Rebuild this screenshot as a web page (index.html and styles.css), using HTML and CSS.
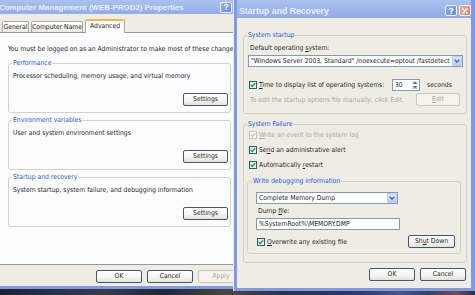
FILE: index.html
```html
<!DOCTYPE html>
<html lang="en">
<head>
<meta charset="utf-8">
<title>Startup and Recovery</title>
<link rel="stylesheet" href="styles.css">
</head>
<body>
<div class="desktop">

  <section class="win win-left">
    <header class="titlebar">
      <span class="title">Computer Management (WEB-PROD2) Properties</span>
      <span class="tbtn help">?</span>
    </header>
    <div class="client">
      <nav class="tabs">
        <span class="tab t1">General</span>
        <span class="tab t2">Computer Name</span>
        <span class="tab sel">Advanced</span>
      </nav>
      <div class="panel">
        <p class="note">You must be logged on as an Administrator to make most of these changes.</p>
        <fieldset class="grp lgrp first">
          <legend>Performance</legend>
          <div class="gbody">
            <p class="desc">Processor scheduling, memory usage, and virtual memory</p>
            <div class="brow"><button class="btn set">Settings</button></div>
          </div>
        </fieldset>
        <fieldset class="grp lgrp">
          <legend>Environment variables</legend>
          <div class="gbody">
            <p class="desc">User and system environment settings</p>
            <div class="brow"><button class="btn set">Settings</button></div>
          </div>
        </fieldset>
        <fieldset class="grp lgrp">
          <legend>Startup and recovery</legend>
          <div class="gbody">
            <p class="desc">System startup, system failure, and debugging information</p>
            <div class="brow"><button class="btn set">Settings</button></div>
          </div>
        </fieldset>
      </div>
      <div class="footer">
        <button class="btn">OK</button>
        <button class="btn">Cancel</button>
        <button class="btn" disabled>Apply</button>
      </div>
    </div>
  </section>

  <section class="win win-right">
    <header class="titlebar">
      <span class="title">Startup and Recovery</span>
      <span class="tbtn help">?</span>
      <span class="tbtn close"><svg width="6" height="6" viewBox="0 0 6 6"><path d="M0.8 0.8L5.2 5.2M5.2 0.8L0.8 5.2" stroke="#fff" stroke-width="1.3" stroke-linecap="round"/></svg></span>
    </header>
    <div class="client">
      <fieldset class="grp g-startup">
        <legend>System startup</legend>
        <div class="gbody">
          <div class="lbl">Default operating <u>s</u>ystem:</div>
          <div class="combo">
            <span class="val">"Windows Server 2003, Standard" /noexecute=optout /fastdetect</span>
            <span class="drop"><svg width="6" height="4" viewBox="0 0 6 4"><path d="M0.7 0.8L3 3.1L5.3 0.8" fill="none" stroke="#4d6185" stroke-width="1.3"/></svg></span>
          </div>
          <div class="row r-time">
            <span class="chk"><svg width="6" height="6" viewBox="0 0 6 6"><path d="M0.8 2.9L2.3 4.5L5.2 1.2" fill="none" stroke="#21a121" stroke-width="1.3"/></svg></span>
            <span class="ctext"><u>T</u>ime to display list of operating systems:</span>
            <span class="spin">
              <span class="val">30</span>
              <span class="arrows">
                <span><svg width="4" height="3" viewBox="0 0 4 3"><path d="M0 3L2 0.6L4 3Z" fill="#4d6185"/></svg></span>
                <span><svg width="4" height="3" viewBox="0 0 4 3"><path d="M0 0L2 2.4L4 0Z" fill="#4d6185"/></svg></span>
              </span>
            </span>
            <span class="unit">seconds</span>
          </div>
          <div class="row r-edit">
            <span class="dis">To edit the startup options file manually, click Edit.</span>
            <button class="btn edit" disabled><u>E</u>dit</button>
          </div>
        </div>
      </fieldset>

      <fieldset class="grp g-fail">
        <legend>System Failure</legend>
        <div class="gbody">
          <div class="row chkrow dis">
            <span class="chk off"><svg width="6" height="6" viewBox="0 0 6 6"><path d="M0.8 2.9L2.3 4.5L5.2 1.2" fill="none" stroke="#c6c3b6" stroke-width="1.3"/></svg></span>
            <span><u>W</u>rite an event to the system log</span>
          </div>
          <div class="row chkrow">
            <span class="chk"><svg width="6" height="6" viewBox="0 0 6 6"><path d="M0.8 2.9L2.3 4.5L5.2 1.2" fill="none" stroke="#21a121" stroke-width="1.3"/></svg></span>
            <span>Se<u>n</u>d an administrative alert</span>
          </div>
          <div class="row chkrow">
            <span class="chk"><svg width="6" height="6" viewBox="0 0 6 6"><path d="M0.8 2.9L2.3 4.5L5.2 1.2" fill="none" stroke="#21a121" stroke-width="1.3"/></svg></span>
            <span>Automatically <u>r</u>estart</span>
          </div>

          <fieldset class="grp g-debug">
            <legend>Write debugging information</legend>
            <div class="gbody">
              <div class="combo mid">
                <span class="val">Complete Memory Dump</span>
                <span class="drop"><svg width="6" height="4" viewBox="0 0 6 4"><path d="M0.7 0.8L3 3.1L5.3 0.8" fill="none" stroke="#4d6185" stroke-width="1.3"/></svg></span>
              </div>
              <div class="lbl">Dump <u>f</u>ile:</div>
              <div class="field">%SystemRoot%\MEMORY.DMP</div>
              <div class="row r-over">
                <span class="chkwrap">
                  <span class="chk"><svg width="6" height="6" viewBox="0 0 6 6"><path d="M0.8 2.9L2.3 4.5L5.2 1.2" fill="none" stroke="#21a121" stroke-width="1.3"/></svg></span>
                  <span><u>O</u>verwrite any existing file</span>
                </span>
                <button class="btn shut">Sh<u>u</u>t Down</button>
              </div>
            </div>
          </fieldset>
        </div>
      </fieldset>

      <div class="footer">
        <button class="btn">OK</button>
        <button class="btn">Cancel</button>
      </div>
    </div>
  </section>

</div>
</body>
</html>
```

FILE: styles.css
```css
* { box-sizing: border-box; }
html, body { margin: 0; padding: 0; }
body {
  width: 475px;
  height: 295px;
  overflow: hidden;
  font-family: "DejaVu Sans Condensed", "DejaVu Sans", sans-serif;
  font-stretch: condensed;
  font-size: 6.75px;
  color: #1e1e1e;
  background: #262a3c;
}
p { margin: 0; }
u { text-decoration-thickness: 1px; }

.desktop {
  position: relative;
  width: 475px;
  height: 295px;
  overflow: hidden;
  background: linear-gradient(90deg, #1c2030 0%, #2c3148 12%, #3a3a4c 22%, #222638 35%, #4b4744 48%, #2a3150 60%, #2f3a6e 76%, #4a5690 84%, #3a3f6a 90%, #7a4858 96%, #2a2f48 100%);
}

/* windows */
.win {
  position: absolute;
  top: 0;
  display: flex;
  flex-direction: column;
  background: #7e9be2;
}
.win-left {
  left: -8px;
  width: 259px;
  height: 289px;
  padding: 0 3px 3px 3px;
}
.win-right {
  left: 233px;
  width: 242px;
  height: 291px;
  padding: 0 4px 3px 3px;
  border-left: 1px solid #e6ecfb;
}

.titlebar {
  flex: none;
  display: flex;
  align-items: center;
  background: linear-gradient(180deg, #abc1ef 0%, #9cb5ea 55%, #94aee6 100%);
  color: #e8effc;
  white-space: nowrap;
}
.title {
  font-family: "Liberation Sans", Arial, sans-serif;
  font-weight: bold;
  font-stretch: normal;
}
.win-left .title { font-size: 7.9px; }
.win-right .title { font-size: 8.7px; }
.win-left .titlebar { height: 14px; padding-left: 4px; }
.win-left .titlebar .help { margin-left: auto; margin-right: 16px; }
.win-right .titlebar { height: 18px; padding: 3px 0 0 2px; }
.win-right .titlebar .help { margin-left: auto; margin-right: 2px; }

.tbtn {
  width: 12px;
  height: 11px;
  border: 1px solid #f4f7ff;
  border-radius: 2px;
  display: flex;
  align-items: center;
  justify-content: center;
  color: #fff;
  font-family: "Liberation Sans", Arial, sans-serif;
  font-weight: bold;
  font-size: 8.5px;
  font-stretch: normal;
}
.help { background: linear-gradient(135deg, #93b0f3, #6388e6); }
.close { background: linear-gradient(135deg, #ecae9e, #d8806c); }

.client {
  flex: 1;
  display: flex;
  flex-direction: column;
  background: #efede3;
}
.win-left .client { padding: 5px 4px 0 4px; }
.win-right .client { padding: 13px 4px 0 6px; }

/* tabs */
.tabs {
  display: flex;
  align-items: flex-end;
  height: 13px;
  padding-left: 3px;
}
.tab {
  height: 11px;
  margin-right: 2px;
  border: 1px solid #a9aca6;
  border-bottom: none;
  border-radius: 2px 2px 0 0;
  background: linear-gradient(#ffffff, #eceae3);
  display: flex;
  align-items: center;
  justify-content: center;
  white-space: nowrap;
}
.t1 { width: 27px; }
.t2 { width: 52px; }
.tab.sel {
  width: 40px;
  height: 14px;
  margin-bottom: -1px;
  position: relative;
  z-index: 1;
  background: #fcfcfe;
  border-top: 2px solid #f5b64a;
  padding-bottom: 2px;
}

.panel {
  flex: none;
  height: 233px;
  border: 1px solid #919b9c;
  background: #fcfcfe;
  padding: 12px 0 0 8px;
}
.note { line-height: 8px; white-space: nowrap; }

/* group boxes */
.grp {
  margin: 0;
  padding: 0;
  min-width: 0;
  border: 1px solid #d3d2c4;
  border-radius: 3px;
}
.grp > legend {
  padding: 0 1px;
  margin-left: 3px;
  line-height: 9px;
  color: #2456d4;
  white-space: nowrap;
}
.lgrp { width: 223px; margin-top: 3px; }
.lgrp.first { margin-top: 6px; }
.lgrp .gbody { padding: 4px 2px 6px 4px; }
.desc { line-height: 8px; white-space: nowrap; }
.brow { display: flex; justify-content: flex-end; margin-top: 13px; }

/* buttons */
.btn {
  font: inherit;
  font-stretch: inherit;
  height: 13px;
  width: 46px;
  padding: 0;
  border: 1px solid #40587e;
  border-radius: 2px;
  background: linear-gradient(#ffffff 0%, #f6f5f0 55%, #e4e1d7 100%);
  color: #1e1e1e;
  line-height: 11px;
  white-space: nowrap;
}
.btn.set { width: 45px; }
.btn:disabled {
  border-color: #cbc9bd;
  color: #aca899;
  background: #f4f3ec;
}
.footer {
  flex: none;
  display: flex;
  justify-content: flex-end;
  gap: 5px;
  padding-top: 5px;
}
.win-right .footer { padding-right: 1px; }

/* right window controls */
.lbl { line-height: 8px; padding-left: 2px; white-space: nowrap; }
.dis { color: #aca899; }
.row { display: flex; align-items: center; white-space: nowrap; }

.g-startup .gbody { padding: 4px 3px 7px 4px; }
.combo {
  display: flex;
  align-items: center;
  height: 12px;
  margin-top: 3px;
  border: 1px solid #7f9db9;
  background: #fff;
  padding: 0 0 0 2px;
}
.combo .val { flex: 1; overflow: hidden; white-space: nowrap; }
.drop {
  flex: none;
  width: 10px;
  height: 10px;
  display: flex;
  align-items: center;
  justify-content: center;
  background: linear-gradient(#dfe8fe, #b7cbf7);
  border: 1px solid #bdcef4;
  border-radius: 1px;
}

.chk {
  flex: none;
  width: 8px;
  height: 8px;
  margin-right: 2px;
  border: 1px solid #2a5a88;
  background: linear-gradient(135deg, #dedcd4, #ffffff);
  display: inline-flex;
  align-items: center;
  justify-content: center;
}
.chk.off { border-color: #cac8bb; background: #fbfbf8; }

.r-time { height: 12px; margin-top: 12px; padding-left: 1px; }
.r-time .ctext { width: 133px; }
.spin {
  flex: none;
  width: 28px;
  height: 12px;
  border: 1px solid #7f9db9;
  background: #fff;
  display: flex;
}
.spin .val { flex: 1; padding-left: 2px; line-height: 10px; }
.arrows { width: 8px; display: flex; flex-direction: column; }
.arrows span {
  flex: 1;
  display: flex;
  align-items: center;
  justify-content: center;
  background: linear-gradient(#e1e9fe, #bfd0f8);
  border: 1px solid #fff;
}
.unit { margin-left: 7px; }

.r-edit {
  height: 13px;
  margin-top: 2px;
  padding: 0 3px 0 2px;
  justify-content: space-between;
}
.btn.edit { width: 44px; }

.g-fail { margin-top: 6px; }
.g-fail > .gbody { padding: 1px 5px 8px 3px; }
.chkrow { height: 10px; padding-left: 2px; }
.chkrow + .chkrow { margin-top: 5px; }

.g-debug { margin-top: 7px; }
.g-debug > legend { margin-left: 4px; }
.g-debug > .gbody { padding: 6px 5px 5px 8px; }
.combo.mid { width: 142px; margin-top: 0; }
.g-debug .lbl { margin-top: 3px; }
.field {
  width: 144px;
  height: 12px;
  margin-top: 3px;
  border: 1px solid #7f9db9;
  background: #fff;
  padding-left: 2px;
  line-height: 10px;
  white-space: nowrap;
}
.r-over { height: 13px; margin-top: 5px; justify-content: space-between; }
.chkwrap { display: flex; align-items: center; margin-left: 1px; }
.btn.shut { width: 47px; }
```
